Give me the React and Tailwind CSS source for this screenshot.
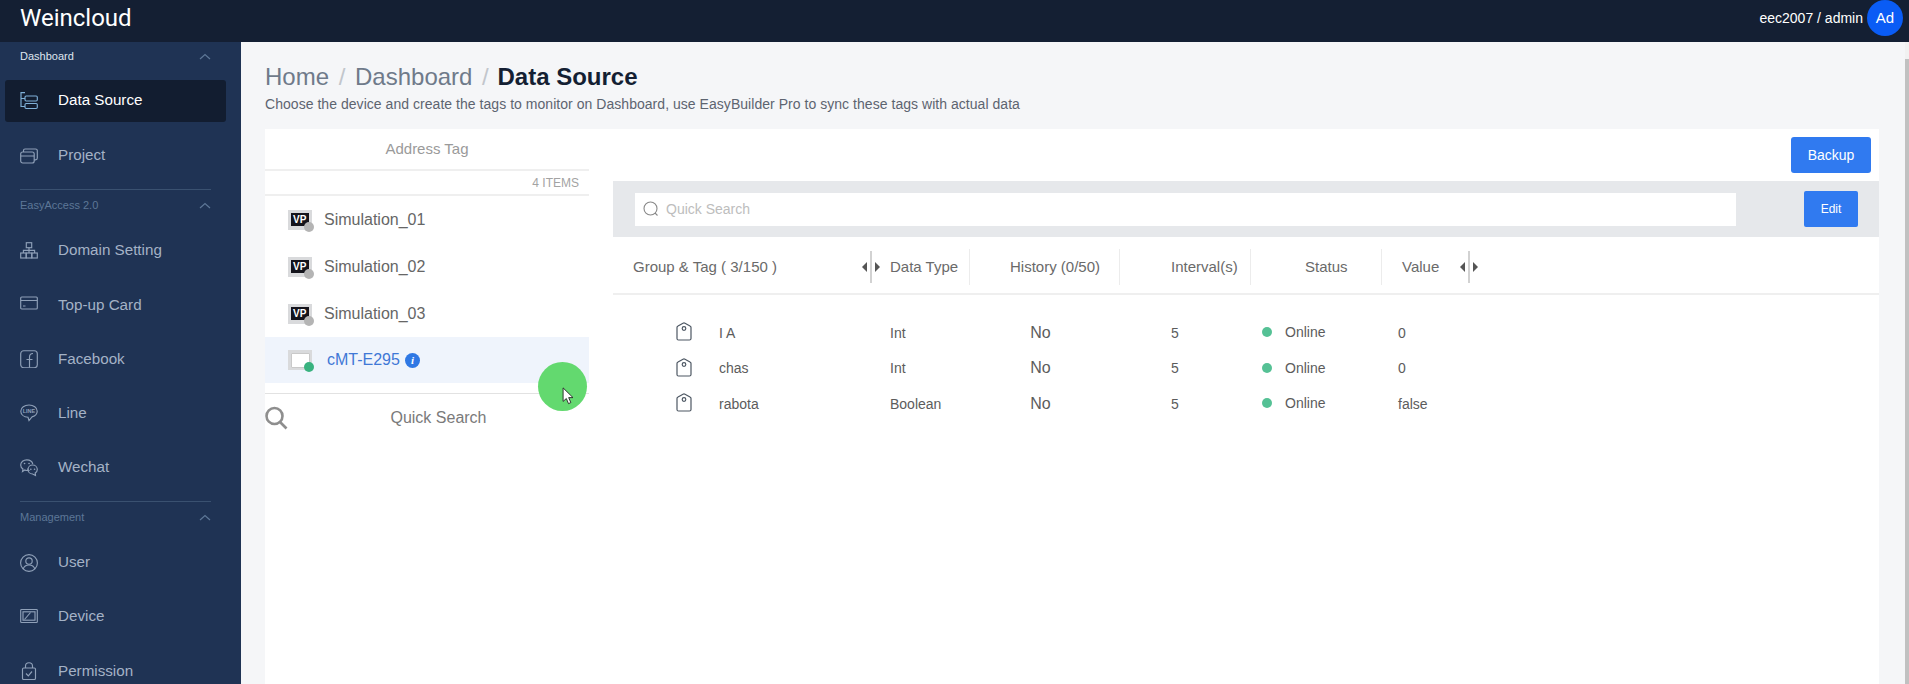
import React from "react";

const sidebarSections = [
  {
    label: "Dashboard",
    active: true,
    items: [
      { name: "Data Source", icon: "source", active: true },
      { name: "Project", icon: "project" },
    ],
  },
  {
    label: "EasyAccess 2.0",
    items: [
      { name: "Domain Setting", icon: "domain" },
      { name: "Top-up Card", icon: "card" },
      { name: "Facebook", icon: "facebook" },
      { name: "Line", icon: "line" },
      { name: "Wechat", icon: "wechat" },
    ],
  },
  {
    label: "Management",
    items: [
      { name: "User", icon: "user" },
      { name: "Device", icon: "device" },
      { name: "Permission", icon: "permission" },
    ],
  },
];

const devices = ["Simulation_01", "Simulation_02", "Simulation_03"];

const tags = [
  { name: "I A", type: "Int", value: "0" },
  { name: "chas", type: "Int", value: "0" },
  { name: "rabota", type: "Boolean", value: "false" },
];

const COLS = "grid grid-cols-[269px_88px_150px_131px_131px_200px]";

const NavIcon = ({ name }) => {
  const shapes = {
    source: (
      <>
        <path d="M5 0.6H1V14.5H5M1 6.5H5" />
        <rect x="5" y="4" width="12.3" height="5" rx="1.2" />
        <rect x="5" y="11.5" width="12.3" height="5" rx="1.2" />
      </>
    ),
    project: (
      <>
        <rect x="0.7" y="5" width="13.5" height="11" rx="2" />
        <path d="M0.7 9H14.2M3.5 5V3.6Q3.5 2 5 2H15.5Q17.3 2 17.3 3.6V11Q17.3 12.8 15.5 12.8H14.2" />
      </>
    ),
    domain: (
      <>
        <rect x="6.3" y="0.7" width="5.4" height="5" />
        <rect x="0.7" y="11" width="5.4" height="5" />
        <rect x="6.3" y="11" width="5.4" height="5" />
        <rect x="11.9" y="11" width="5.4" height="5" />
        <path d="M9 5.7V11M3.4 11V8.3H14.6V11" />
      </>
    ),
    card: (
      <>
        <rect x="0.7" y="1" width="16.6" height="12" rx="1" />
        <path d="M0.7 4.5H17.3M3 10H5.5" />
      </>
    ),
    facebook: (
      <>
        <rect x="0.7" y="0.7" width="16.6" height="17" rx="3" />
        <path d="M9.5 17.5V7Q9.5 3.5 13 3.5M6.5 9.5H12.5" />
      </>
    ),
    line: (
      <>
        <path d="M9 1C4.5 1 0.8 3.6 0.8 7.2C0.8 10.6 4 13 8 13.3L9 16.5L12 12.9C15 12 17.2 9.9 17.2 7.2C17.2 3.6 13.5 1 9 1Z" />
        <text x="9" y="9" textAnchor="middle" fontSize="5.5" fill="currentColor" stroke="none" fontFamily="Liberation Sans, sans-serif" fontWeight="700">LINE</text>
      </>
    ),
    wechat: (
      <>
        <path d="M8 9.5Q7.6 11 8.5 11.3Q6.5 11.8 4.8 11L2.5 12.5L3 10C1 9 0.7 7.5 0.7 6C0.7 3 3.5 0.8 6.8 0.8C9.8 0.8 12.2 2.5 12.8 5" />
        <path d="M17.3 10.5C17.3 8 15.2 6 12.6 6C10 6 8 8 8 10.5C8 13 10 15 12.6 15L15.5 16.5L15.2 14C16.5 13.2 17.3 12 17.3 10.5Z" />
        <path d="M4.5 4.5H4.6M9 4.5H9.1M10.8 10.3H10.9M14.5 10.3H14.6" strokeWidth="1.6" strokeLinecap="round" />
      </>
    ),
    user: (
      <>
        <circle cx="9" cy="9" r="8.4" />
        <circle cx="9" cy="7" r="3.2" />
        <path d="M3.2 15C4 12.3 6 11 9 11C12 11 14 12.3 14.8 15" />
      </>
    ),
    device: (
      <>
        <rect x="0.7" y="1.5" width="16.6" height="13" rx="0.8" />
        <rect x="3" y="3.8" width="12" height="8.4" />
        <path d="M4.5 11.5L10.5 4.5" />
      </>
    ),
    permission: (
      <>
        <rect x="2.5" y="6" width="13" height="11.5" rx="1.2" />
        <path d="M5.5 6V4Q5.5 0.7 9 0.7Q12.5 0.7 12.5 4V6M6 11.5L8.3 13.8L12 9.5" />
      </>
    ),
  };
  return (
    <svg width="18" height="18" viewBox="0 0 18 18" fill="none" stroke="currentColor" strokeWidth="1.15" className="shrink-0">
      {shapes[name]}
    </svg>
  );
};

const Chevron = () => (
  <svg width="12" height="7" viewBox="0 0 12 7" fill="none" stroke="#5d7797" strokeWidth="1.2">
    <path d="M1 6L6 1.5L11 6" />
  </svg>
);

const Sidebar = () => (
  <aside className="w-[241px] shrink-0 h-full overflow-hidden bg-[#1f3354]">
    {sidebarSections.map((section, index) => (
      <div key={section.label} className={index > 0 ? "mt-[12.6px]" : "-mt-[1px]"}>
        {index > 0 && <div className="ml-5 mr-[30px] h-px bg-[#3a5170]" />}
        <div className="h-[30px] pl-5 pr-[30px] flex items-center justify-between">
          <span className={`text-[11px] ${section.active ? "text-[#dfe6ef]" : "text-[#5d7797]"}`}>{section.label}</span>
          <Chevron />
        </div>
        <div className={`flex flex-col ${index > 0 ? "mt-[9.5px] gap-[12.2px]" : "mt-[8.5px] gap-[13.2px]"}`}>
          {section.items.map((item) => (
            <div
              key={item.name}
              className={`h-[42px] ml-[5px] mr-[15px] pl-[15px] rounded-[3px] flex items-center gap-5 text-[15.2px] ${
                item.active ? "bg-[#121d30] text-white" : "text-[#a4b2c6]"
              }`}
            >
              <span className={item.active ? "flex text-[#7fb0d8]" : "flex text-[#8fa0b8]"}>
                <NavIcon name={item.icon} />
              </span>
              {item.name}
            </div>
          ))}
        </div>
      </div>
    ))}
  </aside>
);

const DeviceIcon = ({ vp, online }) => (
  <span className="relative w-6 h-5 bg-[#d9dadc] flex items-center justify-center shrink-0">
    {vp ? (
      <span className="w-[18px] h-[13px] bg-[#14141c] text-white text-[10px] leading-[13px] font-bold pl-[2px] overflow-hidden">VP</span>
    ) : (
      <span className="w-[19px] h-[15px] bg-white border border-[#c9c9c9] rounded-[1px]" />
    )}
    <span className={`absolute -right-[2px] -bottom-[2px] w-[10px] h-[10px] rounded-full ${online ? "bg-[#39b27f]" : "bg-[#b4b4b4]"}`} />
  </span>
);

const DevicePanel = () => (
  <section className="w-[324px] shrink-0 relative">
    <div className="h-[42px] flex items-center justify-center text-[#9a9a9a] text-[15px] border-b-2 border-[#efefef]">Address Tag</div>
    <div className="h-[25px] flex items-center justify-end pr-[10px] pt-[1px] text-xs font-medium text-[#a3a3a3] border-b-2 border-[#efefef]">4 ITEMS</div>
    {devices.map((device) => (
      <div key={device} className="h-[47px] pl-[23px] flex items-center gap-3 text-base text-[#666666]">
        <DeviceIcon vp />
        {device}
      </div>
    ))}
    <div className="h-[46px] pl-[23px] flex items-center bg-[#eff4fc] text-base text-[#3f78d6]">
      <DeviceIcon online />
      <span className="ml-[15px]">cMT-E295</span>
      <span className="ml-[5px] w-[15px] h-[15px] rounded-full bg-[#2f78e4] text-white text-[11px] leading-[15px] text-center italic font-bold font-['Liberation_Serif',serif]">i</span>
    </div>
    <div className="mt-[10px] border-t border-[#e2e2e2] h-[48px] flex items-center">
      <svg width="23" height="24" viewBox="0 0 23 24" fill="none" stroke="#8e8e8e" strokeWidth="2.6" className="shrink-0">
        <circle cx="9.5" cy="10" r="8" />
        <path d="M15 16L21.5 22.5" />
      </svg>
      <span className="flex-1 text-center text-base text-[#7a7a7a]">Quick Search</span>
    </div>
    <div className="absolute left-[273px] top-[233px] w-[49px] h-[49px] rounded-full bg-[#63d96f]">
      <svg width="13" height="18" viewBox="0 0 14 20" className="absolute left-[24px] top-[25px]">
        <path d="M1 1V16L4.6 12.8L7 18.5L9.6 17.3L7.2 11.8H12Z" fill="#ffffff" stroke="#222222" strokeWidth="1" />
      </svg>
    </div>
  </section>
);

const ResizeHandle = () => (
  <span className="flex items-center gap-[3px]">
    <span className="w-0 h-0 border-y-[5px] border-y-transparent border-r-[5px] border-r-[#555555]" />
    <span className="w-[2px] h-8 bg-[#d2d2d2]" />
    <span className="w-0 h-0 border-y-[5px] border-y-transparent border-l-[5px] border-l-[#555555]" />
  </span>
);

const TagIcon = () => (
  <svg width="16" height="19" viewBox="0 0 16 19" fill="none" stroke="#4d5763" strokeWidth="1.2" className="-mt-[2px]">
    <path d="M1 5.5Q1 4.5 2 4L7 1.2Q8 0.7 9 1.2L14 4Q15 4.5 15 5.5V16.5Q15 18 13.5 18H2.5Q1 18 1 16.5Z" />
    <circle cx="8" cy="6.5" r="1.8" />
  </svg>
);

const TagTable = () => (
  <section className="flex-1 min-w-0">
    <div className="h-[52px] flex items-center justify-end pr-2">
      <button className="w-20 h-9 rounded-[3px] bg-[#307af0] text-white text-sm">Backup</button>
    </div>
    <div className="h-14 bg-[#e6e8eb] flex items-center pl-[22px] pr-[21px] justify-between">
      <div className="w-[1101px] h-[33px] bg-white flex items-center pl-2 gap-[7px] text-sm text-[#bdbdbd]">
        <svg width="16" height="16" viewBox="0 0 16 16" fill="none" stroke="#888888" strokeWidth="1.1">
          <circle cx="7.5" cy="7.5" r="6.5" />
          <path d="M12 12L14.5 14.5" />
        </svg>
        Quick Search
      </div>
      <button className="w-[54px] h-9 rounded-[2px] bg-[#307af0] text-white text-xs font-medium">Edit</button>
    </div>
    <div className={`${COLS} h-[58px] pt-1 items-center border-b-2 border-[#efefef] text-[15px] text-[#6a6a6a]`}>
      <div className="pl-5 pr-[2px] flex items-center justify-between">
        Group & Tag ( 3/150 )
        <ResizeHandle />
      </div>
      <div className="h-9 flex items-center border-r border-[#ececec]">
        <span className="ml-[8px]">Data Type</span>
      </div>
      <div className="pl-[40px] h-9 flex items-center border-r border-[#ececec]">History (0/50)</div>
      <div className="pl-[51px] h-9 flex items-center border-r border-[#ececec]">Interval(s)</div>
      <div className="pl-[54px] h-9 flex items-center border-r border-[#ececec]">Status</div>
      <div className="pl-5 flex items-center gap-[21px]">
        Value
        <ResizeHandle />
      </div>
    </div>
    <div className="mt-5">
      {tags.map((tag) => (
        <div key={tag.name} className={`${COLS} h-[35.5px] items-center text-sm text-[#5c5c5c]`}>
          <div className="pl-[63px] flex items-center gap-[27px]">
            <TagIcon />
            {tag.name}
          </div>
          <div className="pl-2">{tag.type}</div>
          <div className="pr-[9px] text-center text-base">No</div>
          <div className="pl-[51px]">5</div>
          <div className="pl-[11px] flex items-center gap-[13px] -mt-[1px]">
            <span className="w-[10px] h-[10px] rounded-full bg-[#55c195]" />
            Online
          </div>
          <div className="pl-4">{tag.value}</div>
        </div>
      ))}
    </div>
  </section>
);

export default function App() {
  return (
    <div className="h-screen flex flex-col overflow-hidden font-['Liberation_Sans',Arial,sans-serif]">
      <header className="h-[42px] shrink-0 bg-[#141f33] flex items-center justify-between pl-5 pr-[6px]">
        <span className="text-[24px] text-white font-['Roboto',sans-serif] -mt-[6px]">Weincloud</span>
        <div className="flex items-center gap-[4px] text-sm text-white -mt-[7px]">
          eec2007 / admin
          <span className="w-9 h-9 rounded-full bg-[#0a5cf5] flex items-center justify-center text-[15px]">Ad</span>
        </div>
      </header>
      <div className="flex-1 min-h-0 flex">
        <Sidebar />
        <main className="flex-1 min-w-0 flex bg-[#f5f6f8]">
          <div className="flex-1 min-w-0 pl-6 pr-[26px] pt-[19px] flex flex-col">
            <h1 className="text-2xl text-[#6f7a8a]">
              Home <span className="mx-[3px] text-[#c2c6cc]">/</span> Dashboard <span className="mx-[3px] text-[#c2c6cc]">/</span>{" "}
              <span className="font-bold text-[#141f33] -ml-[1px]">Data Source</span>
            </h1>
            <p className="mt-[1px] text-sm leading-5 tracking-[0.04px] text-[#5d6470]">
              Choose the device and create the tags to monitor on Dashboard, use EasyBuilder Pro to sync these tags with actual data
            </p>
            <div className="mt-[15px] flex-1 bg-white flex gap-6">
              <DevicePanel />
              <TagTable />
            </div>
          </div>
          <div className="w-1 shrink-0 pt-[17px] bg-[#f1f1f1]">
            <div className="h-full bg-[#c1c1c1]" />
          </div>
        </main>
      </div>
    </div>
  );
}
